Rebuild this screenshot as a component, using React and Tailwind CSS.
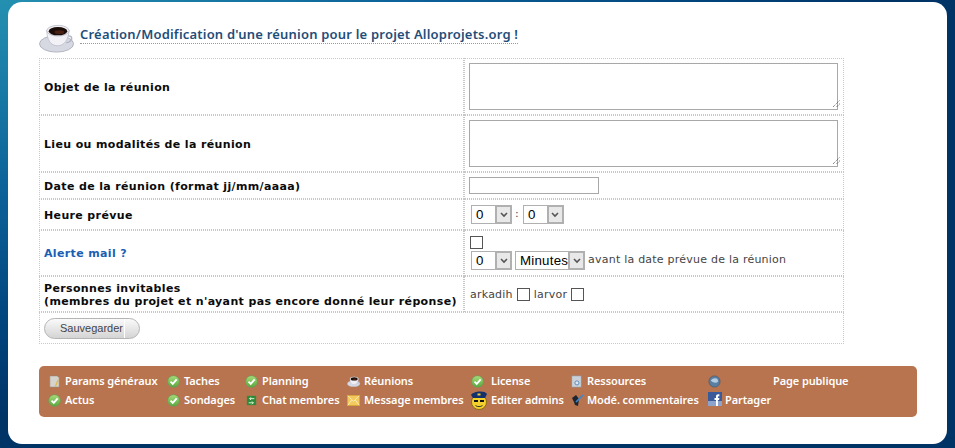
const CheckIcon = () => (
  <svg viewBox="0 0 14 14" className="w-[13px] h-[13px] shrink-0">
    <defs>
      <linearGradient id="gloss" x1="0" y1="0" x2="0" y2="1">
        <stop offset="0" stopColor="#a9dc7a" />
        <stop offset="1" stopColor="#58a83e" />
      </linearGradient>
    </defs>
    <circle cx="7" cy="7" r="6.3" fill="url(#gloss)" stroke="#6e9a58" strokeWidth="0.8" />
    <path d="M3.8 7.2 6.2 9.6 10.4 4.8" fill="none" stroke="#fff" strokeWidth="2" />
  </svg>
);

const CupIcon = ({ className }) => (
  <svg viewBox="0 0 38 30" className={className}>
    <ellipse cx="18" cy="21" rx="17.5" ry="8.5" fill="#d6d8e2" stroke="#a4a6b4" strokeWidth="0.8" />
    <path d="M8 7c0 10 4 16 11 16s11-6 12-16z" fill="#f1f1f6" stroke="#b4b6c4" strokeWidth="0.7" />
    <path d="M30 13c4-1 5 4 1 6l-3 1" fill="none" stroke="#b4b6c4" strokeWidth="1.5" />
    <ellipse cx="19.5" cy="7.5" rx="11.5" ry="5.5" fill="#efeff4" stroke="#a4a6b4" strokeWidth="0.6" />
    <ellipse cx="19.5" cy="8" rx="9.5" ry="4.3" fill="#1a0d08" />
    <ellipse cx="21" cy="9" rx="5" ry="2" fill="#4a2012" />
  </svg>
);

const DocIcon = () => (
  <svg viewBox="0 0 14 14" className="w-[13px] h-[13px] shrink-0">
    <path d="M2 1h8l2 2v10H2z" fill="#d6d3cc" stroke="#8f8a80" strokeWidth="0.6" />
    <path d="M11 5 8 12" stroke="#e2b94a" strokeWidth="1.4" />
  </svg>
);

const ChatIcon = () => (
  <svg viewBox="0 0 14 14" className="w-[13px] h-[13px] shrink-0">
    <rect x="2" y="2" width="10" height="10" fill="#2f8a3a" />
    <path d="M5 5h5M6.5 3.5 5 5l1.5 1.5M4 9.5h5M7.5 8 9 9.5 7.5 11" fill="none" stroke="#e8f5e0" strokeWidth="1" />
  </svg>
);

const MailIcon = () => (
  <svg viewBox="0 0 14 12" className="w-[13px] h-[11px] shrink-0">
    <rect x="0.5" y="0.5" width="13" height="11" fill="#f3c85c" stroke="#d9a63c" />
    <path d="M1 1 7 7 13 1M1 11 5 5.5M13 11 9 5.5" fill="none" stroke="#fbeeb8" strokeWidth="1" />
  </svg>
);

const PoliceIcon = () => (
  <svg viewBox="0 0 18 20" className="w-[18px] h-[20px] shrink-0 -my-[4px] -ml-[1px]">
    <circle cx="9" cy="12" r="7.5" fill="#f4d02c" stroke="#6b5a10" strokeWidth="0.7" />
    <path d="M1 5c2-4 14-5 16-1l-2 4H3z" fill="#12306b" />
    <rect x="7.5" y="3.5" width="3" height="2" fill="#e8c83a" />
    <path d="M4 10h4v2H4zM10 10h4v2h-4z" fill="#111" />
    <path d="M5.5 15.5c2 1.5 5 1.5 7 0" fill="none" stroke="#333" />
  </svg>
);

const SearchDocIcon = () => (
  <svg viewBox="0 0 14 14" className="w-[13px] h-[13px] shrink-0">
    <rect x="2" y="1" width="10" height="12" fill="#c9d0d8" stroke="#8a949e" strokeWidth="0.6" />
    <circle cx="7.5" cy="8.5" r="2.2" fill="#dce9f5" stroke="#5b84b0" />
  </svg>
);

const PenIcon = () => (
  <svg viewBox="0 0 14 14" className="w-[14px] h-[14px] shrink-0">
    <path d="M2 5 6 2l3 4-1 7-3-1-1-3z" fill="#1f2530" />
    <path d="M6 9 13 2" stroke="#3a8ad0" strokeWidth="1.6" />
  </svg>
);

const GlobeIcon = () => (
  <svg viewBox="0 0 14 14" className="w-[13px] h-[13px] shrink-0">
    <circle cx="7" cy="7" r="6" fill="#5b7fa3" stroke="#36506e" strokeWidth="0.6" />
    <path d="M3 6c2-3 5-3 7-2l1 3c-2 2-5 2-8-1z" fill="#b4cde2" />
  </svg>
);

const FacebookIcon = () => (
  <svg viewBox="0 0 14 14" className="w-[14px] h-[14px] shrink-0 -mt-[3px] -mr-[1px]">
    <rect width="14" height="14" fill="#3b5a9a" />
    <rect y="9" width="14" height="5" fill="#8ea3cc" />
    <path d="M8 14V8H6.5V6H8V4.5C8 3 9 2.2 10.4 2.2h1v2h-.8c-.5 0-.7.2-.7.7V6h1.5l-.3 2H9.9v6z" fill="#fff" />
  </svg>
);

const Select = ({ value, width }) => (
  <div className={`flex h-[19px] border border-[#b0b0b0] bg-white ${width}`}>
    <select
      defaultValue={value}
      className="min-w-0 flex-1 appearance-none bg-white pl-[4px] font-['Liberation_Sans',sans-serif] text-[13.3px] leading-none text-black outline-none"
    >
      <option>{value}</option>
    </select>
    <span className="flex w-[17px] shrink-0 items-center justify-center border-2 border-[#b0b0b0] bg-[#e8e8e8] -my-px -mr-px">
      <svg viewBox="0 0 8 6" className="w-[8px] h-[6px]">
        <path d="M1 1 4 4 7 1" fill="none" stroke="#555" strokeWidth="1.6" />
      </svg>
    </span>
  </div>
);

const Checkbox = () => (
  <input type="checkbox" className="h-[13px] w-[13px] appearance-none border border-[#555] bg-white" />
);

const TextArea = () => (
  <div className="relative mb-[1px]">
    <textarea className="block h-[47px] w-[369px] resize-none border border-[#a8a8a8] bg-white outline-none" />
    <svg viewBox="0 0 9 9" className="absolute bottom-[2px] right-[2px] w-[9px] h-[9px]">
      <path d="M1 8 8 1M4.5 8 8 4.5" stroke="#555" strokeWidth="1" strokeDasharray="1 1" />
    </svg>
  </div>
);

const labelCell =
  "border border-dotted border-[#c8c8c8] pl-[4px] pt-[1px] align-middle font-['DejaVu_Sans',sans-serif] text-[11px] font-bold leading-[13px] tracking-[0.36px] text-[#0b0b0b]";
const valueCell =
  "border border-dotted border-[#c8c8c8] pl-[4px] align-middle font-['DejaVu_Sans',sans-serif] text-[11px] tracking-[0.23px] text-[#444]";

const menu = [
  [<DocIcon />, "Params généraux"],
  [<CheckIcon />, "Taches"],
  [<CheckIcon />, "Planning"],
  [<CupIcon className="w-[14px] h-[11px] shrink-0" />, "Réunions"],
  [<CheckIcon />, "License", "w-[16px]"],
  [<SearchDocIcon />, "Ressources"],
  [<GlobeIcon />, ""],
  [null, "Page publique"],
  [<CheckIcon />, "Actus"],
  [<CheckIcon />, "Sondages"],
  [<ChatIcon />, "Chat membres"],
  [<MailIcon />, "Message membres"],
  [<PoliceIcon />, "Editer admins", "w-[16px]"],
  [<PenIcon />, "Modé. commentaires"],
  [<FacebookIcon />, "Partager"],
  [null, ""],
];

export default function App() {
  return (
    <div className="h-[448px] overflow-hidden bg-[radial-gradient(ellipse_900px_420px_at_0_0,#2490b0_0%,#0c6299_45%,#00427a_80%,#003366_100%)] px-[8px] pt-[2px]">
      <div className="h-[442px] rounded-[14px] bg-white pl-[31px] pt-[20px]">
        {/* Titre */}
        <div className="flex h-[36px] items-start">
          <CupIcon className="mt-[1px] h-[30px] w-[37px]" />
          <h1 className="ml-[4px] mt-[3px] border-b border-dotted border-[#999] font-['Noto_Sans',sans-serif] text-[13px] font-semibold leading-[18px] tracking-[0.2px] text-[#1f4e79]">
            Création/Modification d'une réunion pour le projet Alloprojets.org !
          </h1>
        </div>

        {/* Formulaire */}
        <table className="w-[805px] table-fixed border-separate border-spacing-0">
          <colgroup>
            <col className="w-[425px]" />
            <col />
          </colgroup>
          <tbody>
            <tr className="h-[57px]">
              <td className={labelCell}>Objet de la réunion</td>
              <td className={valueCell}><TextArea /></td>
            </tr>
            <tr className="h-[57px]">
              <td className={labelCell}>Lieu ou modalités de la réunion</td>
              <td className={valueCell}><TextArea /></td>
            </tr>
            <tr className="h-[27px]">
              <td className={labelCell}>Date de la réunion (format jj/mm/aaaa)</td>
              <td className={valueCell}>
                <input type="text" className="block h-[17px] w-[130px] border border-[#a8a8a8] bg-white outline-none" />
              </td>
            </tr>
            <tr className="h-[31px]">
              <td className={labelCell}>Heure prévue</td>
              <td className={valueCell}>
                <div className="flex items-center gap-[3px] pl-[2px]">
                  <Select value="0" width="w-[41px]" />
                  <span className="mr-[1px]">:</span>
                  <Select value="0" width="w-[41px]" />
                </div>
              </td>
            </tr>
            <tr className="h-[46px]">
              <td className={`${labelCell} text-[#1a5fb4]`}>Alerte mail ?</td>
              <td className={valueCell}>
                <div className="flex flex-col gap-[2px]">
                  <div className="flex pl-[1px]"><Checkbox /></div>
                  <div className="flex items-center gap-[3px] pl-[2px]">
                    <Select value="0" width="w-[41px]" />
                    <Select value="Minutes" width="w-[70px]" />
                    <span>avant la date prévue de la réunion</span>
                  </div>
                </div>
              </td>
            </tr>
            <tr className="h-[36px]">
              <td className={labelCell}>
                Personnes invitables
                <br />
                (membres du projet et n'ayant pas encore donné leur réponse)
              </td>
              <td className={valueCell}>
                <div className="flex items-center gap-[4px] pl-[1px]">
                  <span className="pt-[3px]">arkadih</span>
                  <Checkbox />
                  <span className="pt-[3px]">larvor</span>
                  <Checkbox />
                </div>
              </td>
            </tr>
            <tr className="h-[32px]">
              <td colSpan={2} className="border border-dotted border-[#c8c8c8] pl-[4px] align-middle">
                <button className="flex h-[21px] w-[96px] rounded-full border border-[#b4b4b4] bg-[linear-gradient(#fafafa,#d4d4d4)] font-['Liberation_Sans',sans-serif] text-[11px] leading-[19px] text-[#444]">
                  <span className="w-[80px] border-r border-white pl-[15px] text-left">Sauvegarder</span>
                </button>
              </td>
            </tr>
          </tbody>
        </table>

        {/* Menu projet */}
        <nav className="mt-[22px] grid h-[51px] w-[878px] grid-cols-[119px_78px_102px_124px_99px_138px_65px_1fr] content-center gap-y-[3px] rounded-[5px] bg-[#b7744e] pb-[2px] pl-[9px] font-['Noto_Sans',sans-serif] text-[11px] font-semibold leading-[16px] tracking-[-0.1px] text-white">
          {menu.map(([icon, label, iconWidth], i) => (
            <div key={i} className="flex h-[16px] items-center gap-[4px] whitespace-nowrap">
              {icon && <span className={`flex shrink-0 items-center ${iconWidth || "w-[13px]"}`}>{icon}</span>}
              {label && <span>{label}</span>}
            </div>
          ))}
        </nav>
      </div>
    </div>
  );
}
